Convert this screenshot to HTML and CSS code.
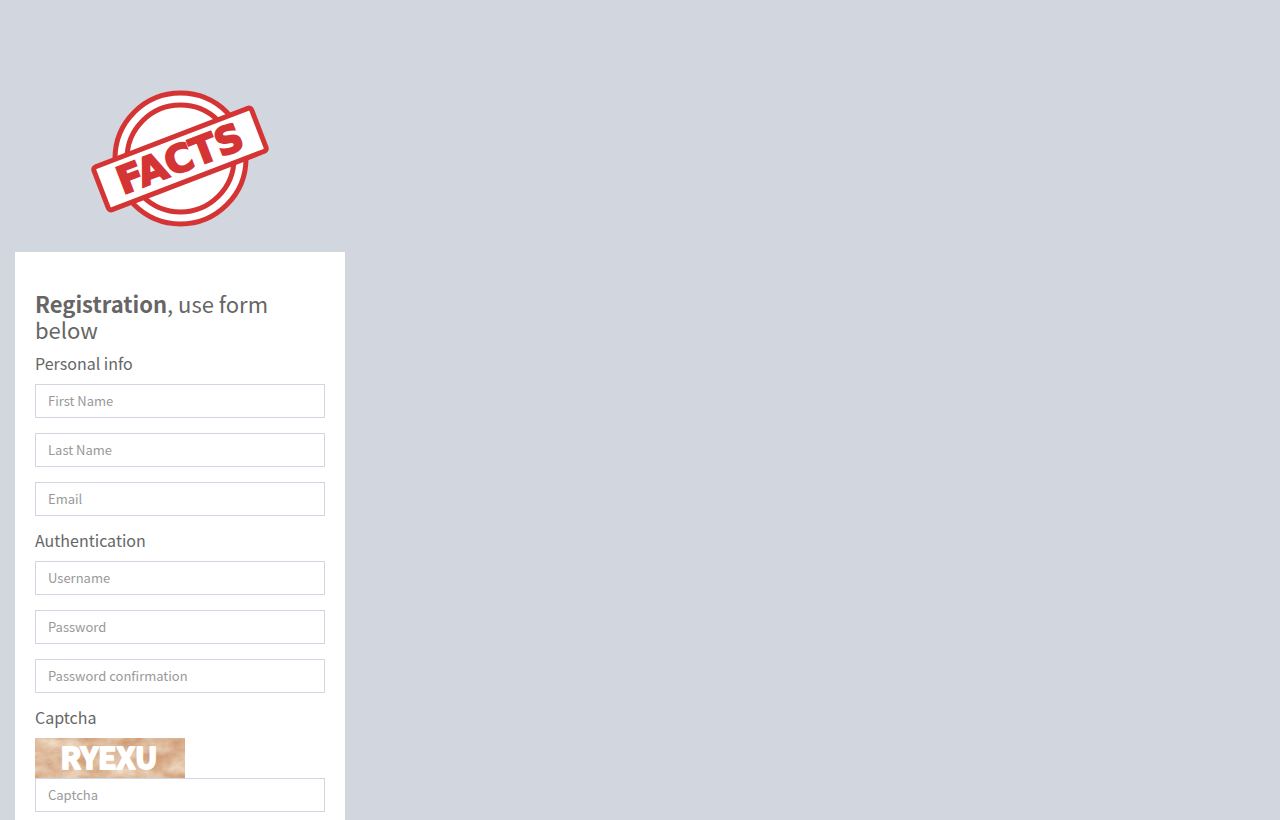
FILE: index.html
```html
<!DOCTYPE html>
<html lang="en">
<head>
    <meta charset="UTF-8">
    <meta name="viewport" content="width=device-width, initial-scale=1.0">
    <title>Registration</title>
    <link rel="stylesheet" href="styles.css">
</head>
<body>
    <div class="registration-container">
        <div class="registration-logo">
            <svg width="180" height="140" viewBox="0 0 180 140" role="img" aria-label="Facts">
                <g fill="#fff" stroke="#d53434" stroke-width="5">
                    <circle cx="90.5" cy="69.5" r="65.5"/>
                    <circle cx="90.5" cy="69.5" r="53.5"/>
                </g>
                <g transform="rotate(-21 90 70)">
                    <rect x="5.5" y="47" width="169" height="46" rx="3" fill="#fff" stroke="#d53434" stroke-width="5"/>
                    <text class="stamp-text" x="90" y="83" text-anchor="middle">FACTS</text>
                </g>
            </svg>
        </div>
        <div class="registration-box">
            <h1 class="registration-title"><strong>Registration</strong>, use form below</h1>
            <form action="#" method="post">
                <h4>Personal info</h4>
                <div class="form-group">
                    <input type="text" class="form-control" placeholder="First Name" aria-label="First Name">
                </div>
                <div class="form-group">
                    <input type="text" class="form-control" placeholder="Last Name" aria-label="Last Name">
                </div>
                <div class="form-group">
                    <input type="email" class="form-control" placeholder="Email" aria-label="Email">
                </div>
                <h4>Authentication</h4>
                <div class="form-group">
                    <input type="text" class="form-control" placeholder="Username" aria-label="Username">
                </div>
                <div class="form-group">
                    <input type="password" class="form-control" placeholder="Password" aria-label="Password">
                </div>
                <div class="form-group">
                    <input type="password" class="form-control" placeholder="Password confirmation" aria-label="Password confirmation">
                </div>
                <h4>Captcha</h4>
                <div class="form-group">
                    <svg class="captcha" width="150" height="40" viewBox="0 0 150 40" role="img" aria-label="Captcha">
                        <!-- crumpled paper -->
                        <filter id="paper" x="0" y="0" width="100%" height="100%" color-interpolation-filters="sRGB">
                            <feTurbulence type="fractalNoise" baseFrequency="0.045 0.07" numOctaves="4" seed="8"/>
                            <feColorMatrix values="0.2 0 0 0 0.77  0.4 0 0 0 0.53  0.5 0 0 0 0.36  0 0 0 0 1"/>
                        </filter>
                        <rect width="150" height="40" fill="#dfb897"/>
                        <rect width="150" height="40" filter="url(#paper)"/>
                        <text class="captcha-text" x="74" y="31" text-anchor="middle">RYEXU</text>
                    </svg>
                    <input type="text" class="form-control" placeholder="Captcha" aria-label="Captcha">
                </div>
            </form>
        </div>
    </div>
</body>
</html>
```
FILE: styles.css
```css
* {
    box-sizing: border-box;
}
body {
    margin: 0;
    background-color: #d2d6df;
    color: #666;
    font-family: "Source Sans Pro", "Noto Sans CJK JP", sans-serif;
    font-size: 14px;
    line-height: 20px;
}
.registration-container {
    max-width: 360px;
    padding: 89px 15px 20px;
}
.registration-logo {
    display: flex;
    justify-content: center;
    margin-bottom: 23px;
}
.stamp-text {
    font-family: "DejaVu Sans", sans-serif;
    font-size: 38px;
    font-weight: 700;
    fill: #d53434;
    stroke: #d53434;
    stroke-width: 2px;
}
.registration-box {
    padding: 38px 20px 20px;
    background-color: #fff;
}
.registration-title {
    margin: 0 0 12px;
    font-size: 22px;
    font-weight: 400;
    line-height: 26px;
}
.registration-title strong {
    font-weight: 700;
}
h4 {
    margin: 0 0 12px;
    font-size: 16px;
    font-weight: 400;
    line-height: 18px;
}
.form-group {
    margin-bottom: 15px;
}
.form-control {
    display: block;
    width: 100%;
    height: 34px;
    padding: 5px 12px 7px;
    border: 1px solid #d2d6e2;
    border-radius: 0;
    background-color: #fff;
    color: #555;
    font-family: inherit;
    font-size: 13px;
    line-height: 20px;
}
.form-control::placeholder {
    color: #999;
    opacity: 1;
}
.form-control:focus {
    border-color: #d53434;
    outline: none;
}
.captcha {
    display: block;
    overflow: visible;
}
.captcha-text {
    font-family: "Noto Sans CJK JP", sans-serif;
    font-size: 30px;
    font-weight: 700;
    fill: #fff;
    stroke: #fff;
    stroke-width: 2px;
    stroke-linejoin: round;
}
```
